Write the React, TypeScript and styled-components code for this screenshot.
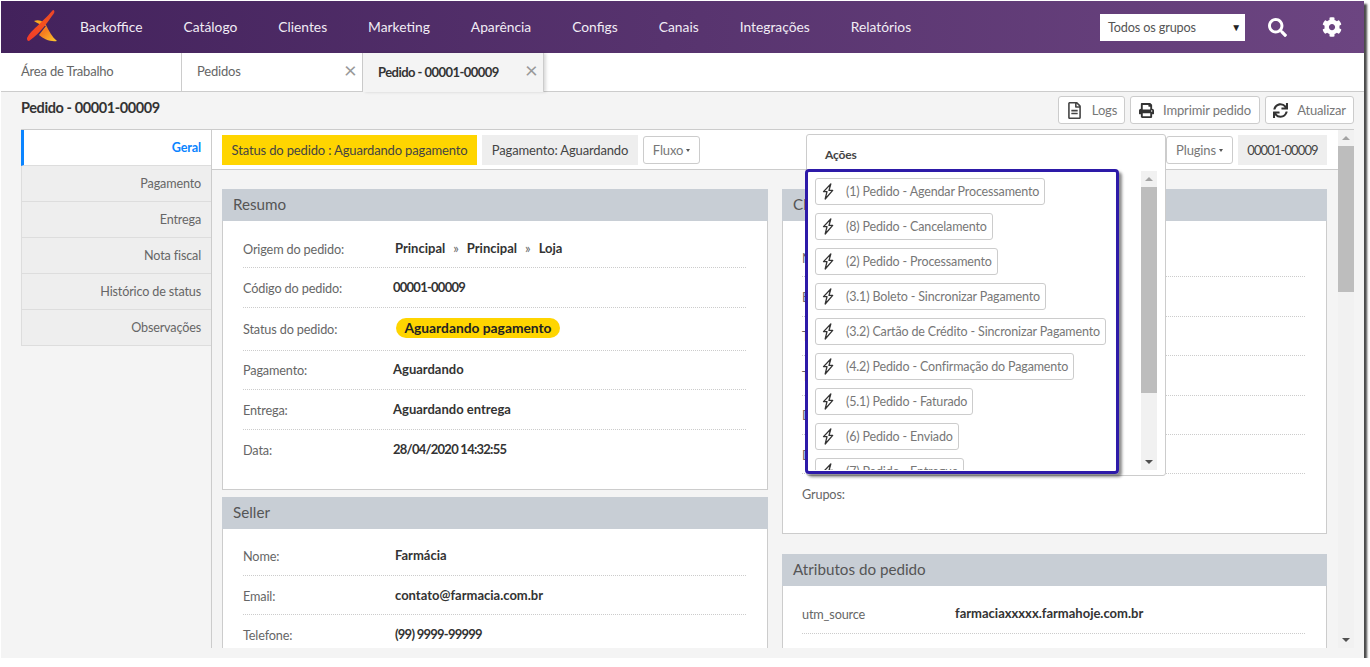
import React from 'react';
import styled, { createGlobalStyle } from 'styled-components';
import { FaCog, FaPrint, FaRegFileAlt, FaSearch, FaSync } from 'react-icons/fa';

const NAV_ITEMS = ['Backoffice', 'Catálogo', 'Clientes', 'Marketing', 'Aparência', 'Configs', 'Canais', 'Integrações', 'Relatórios'];
const SIDE_ITEMS = ['Geral', 'Pagamento', 'Entrega', 'Nota fiscal', 'Histórico de status', 'Observações'];
const ACTIONS = [
  '(1) Pedido - Agendar Processamento',
  '(8) Pedido - Cancelamento',
  '(2) Pedido - Processamento',
  '(3.1) Boleto - Sincronizar Pagamento',
  '(3.2) Cartão de Crédito - Sincronizar Pagamento',
  '(4.2) Pedido - Confirmação do Pagamento',
  '(5.1) Pedido - Faturado',
  '(6) Pedido - Enviado',
  '(7) Pedido - Entregue',
];

const Logo = () => (
  <svg width="32" height="36" viewBox="0 0 32 36">
    <defs>
      <linearGradient id="logoRed" x1="0" y1="1" x2="1" y2="0">
        <stop offset="0" stopColor="#f0392b" />
        <stop offset="0.6" stopColor="#f4511e" />
        <stop offset="1" stopColor="#e8432a" />
      </linearGradient>
      <linearGradient id="logoGold" x1="0" y1="0" x2="1" y2="1">
        <stop offset="0" stopColor="#fbb81f" />
        <stop offset="0.5" stopColor="#f57c1f" />
        <stop offset="1" stopColor="#fcca2e" />
      </linearGradient>
    </defs>
    <path d="M8 12 C14 10 18 13 20 16 C23 22 26 28 31 32 C24 33 18 30 13 26 L20 17 C15 16 11 14 8 12Z" fill="url(#logoGold)" />
    <path d="M27 1 C28.500 1 29 3 27.500 5 C22 12 16 23 3 32 C1 32 1 30 1 29 C6 20 13 17 27 1Z" fill="url(#logoRed)" />
  </svg>
);

// outlined bolt, the icon packages only have a wider one
const BoltIcon = () => (
  <svg width="12" height="17" viewBox="0 0 12 17" fill="none" stroke="#333" strokeWidth="1.300" strokeLinejoin="round">
    <path d="M8.800 1 L1.500 8.600 H5 L3.200 16 L10.700 7.400 H7 Z" />
  </svg>
);

const Row = ({ label, value, valueAt = 150, inset, numeric }: { label: string; value?: React.ReactNode; valueAt?: number; inset?: boolean; numeric?: boolean }) => (
  <StyledRow>
    <RowLabel $width={valueAt}>{label}</RowLabel>
    <RowValue $inset={inset} $numeric={numeric}>{value}</RowValue>
  </StyledRow>
);

const App = () => {
  return (
    <>
      <GlobalStyle />
      <Frame>
        <TopBar>
          <LogoSlot>
            <Logo />
          </LogoSlot>
          <Nav>
            {NAV_ITEMS.map((item) => (
              <NavLink key={item}>{item}</NavLink>
            ))}
          </Nav>
          <GroupSelect>
            Todos os grupos
            <GroupCaret>▼</GroupCaret>
          </GroupSelect>
          <TopIcon $left={23}>
            <FaSearch size={19} />
          </TopIcon>
          <TopIcon $left={35}>
            <FaCog size={20} />
          </TopIcon>
        </TopBar>

        <TabBar>
          <Tab>Área de Trabalho</Tab>
          <Tab>
            Pedidos
            <TabClose>×</TabClose>
          </Tab>
          <Tab $active>
            Pedido - 00001-00009
            <TabClose>×</TabClose>
          </Tab>
        </TabBar>

        <PageHead>
          <PageTitle>Pedido - 00001-00009</PageTitle>
          <HeadActions>
            <HeadButton $width={67}>
              <FaRegFileAlt size={17} color="#444" />
              Logs
            </HeadButton>
            <HeadButton $width={130}>
              <FaPrint size={15} color="#333" />
              Imprimir pedido
            </HeadButton>
            <HeadButton $width={89}>
              <FaSync size={15} color="#333" />
              Atualizar
            </HeadButton>
          </HeadActions>
        </PageHead>

        <Workspace>
          <SideNav>
            {SIDE_ITEMS.map((item, i) => (
              <SideItem key={item} $active={i === 0}>
                {item}
              </SideItem>
            ))}
          </SideNav>

          <Content>
            <Toolbar>
              <StatusTag $yellow $width={255}>Status do pedido : Aguardando pagamento</StatusTag>
              <StatusTag $width={156}>Pagamento: Aguardando</StatusTag>
              <ToolButton $width={57}>
                Fluxo <Caret />
              </ToolButton>
              <ToolbarEnd>
                <ToolButton $width={67}>
                  Plugins <Caret />
                </ToolButton>
                <StatusTag $width={89} $numeric>00001-00009</StatusTag>
              </ToolbarEnd>
            </Toolbar>

            <Columns>
              <Column $gap={7}>
                <Card>
                  <CardHead>Resumo</CardHead>
                  <CardBody $top={8} $left={20}>
                    <Row
                      label="Origem do pedido:"
                      inset
                      value={
                        <Trail>
                          Principal <TrailSep>»</TrailSep> Principal <TrailSep>»</TrailSep> Loja
                        </Trail>
                      }
                    />
                    <Row label="Código do pedido:" value="00001-00009" numeric />
                    <StatusRow>
                      <RowLabel $width={150}>Status do pedido:</RowLabel>
                      <Pill>Aguardando pagamento</Pill>
                    </StatusRow>
                    <Row label="Pagamento:" value="Aguardando" />
                    <Row label="Entrega:" value="Aguardando entrega" />
                    <Row label="Data:" value="28/04/2020 14:32:55" numeric />
                  </CardBody>
                </Card>
                <Card>
                  <CardHead>Seller</CardHead>
                  <CardBody $top={8} $left={20}>
                    <Row label="Nome:" value="Farmácia" inset />
                    <Row label="Email:" value="contato@farmacia.com.br" inset />
                    <Row label="Telefone:" value="(99) 9999-99999" inset numeric />
                  </CardBody>
                </Card>
              </Column>

              <Column $gap={20}>
                <Card>
                  <CardHead>Cliente</CardHead>
                  <CardBody $top={17} $left={19}>
                    <Row label="Nome:" valueAt={153} />
                    <Row label="Email:" valueAt={153} />
                    <Row label="Telefone:" valueAt={153} />
                    <Row label="Tipo:" valueAt={153} />
                    <Row label="Documento:" valueAt={153} />
                    <Row label="Data:" valueAt={153} />
                    <Row label="Grupos:" valueAt={153} />
                  </CardBody>
                </Card>
                <Card>
                  <CardHead>Atributos do pedido</CardHead>
                  <CardBody $top={8} $left={19}>
                    <Row label="utm_source" value="farmaciaxxxxx.farmahoje.com.br" valueAt={153} />
                    <Row label="" />
                  </CardBody>
                </Card>
              </Column>
            </Columns>

            <ActionsPopup>
              <PopupTitle>Ações</PopupTitle>
              <ActionsArea>
                <ActionList>
                  {ACTIONS.map((action) => (
                    <ActionButton key={action}>
                      <BoltIcon />
                      {action}
                    </ActionButton>
                  ))}
                </ActionList>
                <Scrollbar $thumbHeight={206} />
                <Highlight />
              </ActionsArea>
            </ActionsPopup>
          </Content>

          <Scrollbar $thumbHeight={146} />
        </Workspace>
      </Frame>
    </>
  );
};

const Scrollbar = ({ $thumbHeight }: { $thumbHeight: number }) => (
  <ScrollTrack>
    <ScrollArrow />
    <ScrollThumb $height={$thumbHeight} />
    <ScrollFill />
    <ScrollArrow $down />
  </ScrollTrack>
);

/**
 * styles
 */
const GlobalStyle = createGlobalStyle`
  html, body {
    margin: 0;
    padding: 0;
    background: #fff;
    font-family: Lato, "Open Sans", sans-serif;
    font-size: 13px;
    letter-spacing: -0.15px;
    color: #555;
  }
`;

const Frame = styled.div`
  width: 1363px;
  height: 657px;
  margin: 1px 0 0 1px;
  display: flex;
  flex-direction: column;
  background: #f4f4f4;
  box-shadow: 3px 3px 2px #4a4a4a;
  overflow: hidden;
`;

const TopBar = styled.header`
  height: 52px;
  flex: none;
  display: flex;
  align-items: center;
  background: linear-gradient(90deg, #43225c 0%, #6c4581 100%);
`;

const LogoSlot = styled.div`
  width: 79px;
  padding-left: 25px;
  box-sizing: border-box;
  display: flex;
`;

const Nav = styled.nav`
  display: flex;
  gap: 41px;
  flex: 1;
  padding-bottom: 2px;
`;

const NavLink = styled.a`
  color: #f1ecf5;
  font-size: 13.8px;
  letter-spacing: 0;
`;

const GroupSelect = styled.div`
  width: 145px;
  height: 27px;
  box-sizing: border-box;
  padding: 0 4px 0 8px;
  display: flex;
  align-items: center;
  justify-content: space-between;
  background: #fff;
  color: #555;
  font-size: 12.7px;
`;

const GroupCaret = styled.span`
  font-size: 10px;
  color: #222;
`;

const TopIcon = styled.span<{ $left: number }>`
  display: flex;
  color: #fff;
  margin-left: ${(p) => p.$left}px;
  &:last-child {
    margin-right: 22px;
  }
`;

const TabBar = styled.div`
  height: 39px;
  flex: none;
  box-sizing: border-box;
  display: flex;
  background: #fff;
  border-bottom: 1px solid #ccc;
`;

const Tab = styled.div<{ $active?: boolean }>`
  width: 181px;
  height: ${(p) => (p.$active ? '39px' : '38px')};
  box-sizing: border-box;
  padding: 0 0 2px 15px;
  display: flex;
  align-items: center;
  justify-content: space-between;
  white-space: nowrap;
  border-right: 1px solid #ccc;
  background: ${(p) => (p.$active ? '#f4f4f4' : '#fff')};
  color: ${(p) => (p.$active ? '#333' : '#666')};
  font-weight: ${(p) => (p.$active ? 700 : 400)};
  letter-spacing: ${(p) => (p.$active ? '-0.55px' : '-0.2px')};
  box-shadow: ${(p) => (p.$active ? '2px 0 3px rgba(0, 0, 0, 0.15)' : 'none')};
  &:first-child {
    padding-left: 20px;
  }
`;

const TabClose = styled.span`
  width: 18px;
  text-align: left;
  font-size: 22px;
  font-weight: 400;
  line-height: 20px;
  color: #999;
  margin-top: -3px;
`;

const PageHead = styled.div`
  height: 37px;
  flex: none;
  box-sizing: border-box;
  padding: 4px 10px 5px 20px;
  display: flex;
  justify-content: space-between;
`;

const PageTitle = styled.h1`
  margin: 3px 0 0;
  font-size: 14.5px;
  font-weight: 700;
  letter-spacing: -0.4px;
  color: #333;
`;

const HeadActions = styled.div`
  display: flex;
  gap: 5px;
`;

const HeadButton = styled.button<{ $width: number }>`
  width: ${(p) => p.$width}px;
  height: 28px;
  padding: 0;
  display: flex;
  align-items: center;
  justify-content: center;
  gap: 9px;
  background: #fff;
  border: 1px solid #ccc;
  border-radius: 3px;
  font: inherit;
  letter-spacing: inherit;
  color: #777;
`;

const Workspace = styled.div`
  height: 518px;
  flex: none;
  margin: 0 10px 0 20px;
  display: flex;
  border-top: 1px solid #ccc;
`;

const SideNav = styled.aside`
  width: 190px;
  flex: none;
`;

const SideItem = styled.div<{ $active?: boolean }>`
  height: 36px;
  box-sizing: border-box;
  padding: 0 10px 1px 0;
  display: flex;
  align-items: center;
  justify-content: flex-end;
  border-bottom: 1px solid #ddd;
  border-left: ${(p) => (p.$active ? '3px solid #0a84ff' : '1px solid #ddd')};
  background: ${(p) => (p.$active ? '#fff' : '#eee')};
  color: ${(p) => (p.$active ? '#0a84ff' : '#666')};
  font-size: 12.6px;
  font-weight: ${(p) => (p.$active ? 700 : 400)};
`;

const Content = styled.main`
  position: relative;
  flex: 1;
  min-width: 0;
  border-left: 1px solid #ccc;
  overflow: hidden;
`;

const Toolbar = styled.div`
  height: 40px;
  box-sizing: border-box;
  padding: 5px 11px 0 10px;
  display: flex;
  align-items: flex-start;
  gap: 5px;
  background: #fff;
  border-bottom: 1px solid #ccc;
`;

const ToolbarEnd = styled.div`
  margin-left: auto;
  display: flex;
  align-items: flex-start;
  gap: 5px;
`;

const StatusTag = styled.div<{ $yellow?: boolean; $width: number; $numeric?: boolean }>`
  width: ${(p) => p.$width}px;
  height: 30px;
  display: flex;
  align-items: center;
  justify-content: center;
  background: ${(p) => (p.$yellow ? '#ffd500' : '#eee')};
  color: #444;
  letter-spacing: ${(p) => (p.$numeric ? '-0.9px' : 'inherit')};
`;

const ToolButton = styled.button<{ $width: number }>`
  width: ${(p) => p.$width}px;
  height: 28px;
  margin-top: 1px;
  padding: 0;
  display: flex;
  align-items: center;
  justify-content: center;
  gap: 3px;
  background: #fff;
  border: 1px solid #ccc;
  border-radius: 3px;
  font: inherit;
  letter-spacing: inherit;
  color: #777;
`;

const Caret = styled.i`
  width: 0;
  height: 0;
  border-left: 2.500px solid transparent;
  border-right: 2.500px solid transparent;
  border-top: 3px solid #555;
`;

const Columns = styled.div`
  padding: 19px 11px 0 10px;
  display: grid;
  grid-template-columns: 546px 545px;
  gap: 14px;
`;

const Column = styled.div<{ $gap: number }>`
  display: flex;
  flex-direction: column;
  gap: ${(p) => p.$gap}px;
`;

const Card = styled.section`
  background: #fff;
  border: 1px solid #ccc;
  border-top: 0;
`;

const CardHead = styled.h2`
  height: 32px;
  margin: 0 -1px;
  padding: 0 0 2px 11px;
  box-sizing: border-box;
  display: flex;
  align-items: center;
  background: #c8ced5;
  font-size: 15.2px;
  font-weight: 400;
  letter-spacing: 0;
  color: #555;
`;

const CardBody = styled.div<{ $top: number; $left: number }>`
  padding: ${(p) => p.$top}px 21px 20px ${(p) => p.$left}px;
`;

const StyledRow = styled.div`
  min-height: 39.4px;
  box-sizing: border-box;
  display: flex;
  align-items: center;
  border-bottom: 1px dotted #ccc;
  &:last-child {
    border-bottom: 0;
    min-height: 39px;
  }
`;

const StatusRow = styled(StyledRow)`
  min-height: 43px;
`;

const RowLabel = styled.span<{ $width: number }>`
  width: ${(p) => p.$width}px;
  flex: none;
  padding-top: 1px;
  color: #666;
  font-size: 12.7px;
`;

const RowValue = styled.span<{ $inset?: boolean; $numeric?: boolean }>`
  padding-left: ${(p) => (p.$inset ? 2 : 0)}px;
  margin-top: -1px;
  color: #333;
  font-weight: 700;
  letter-spacing: ${(p) => (p.$numeric ? '-0.75px' : '0')};
`;

const Trail = styled.span`
  display: inline-flex;
  gap: 8px;
`;

const TrailSep = styled.span`
  font-weight: 400;
  color: #666;
`;

const Pill = styled.span`
  width: 164px;
  height: 20px;
  margin: -2px 0 0 3px;
  display: flex;
  align-items: center;
  justify-content: center;
  border-radius: 10px;
  background: #ffd500;
  color: #222;
  font-size: 13.8px;
  font-weight: 700;
  letter-spacing: 0;
`;

const ActionsPopup = styled.div`
  position: absolute;
  top: 4px;
  left: 594px;
  width: 360px;
  height: 342px;
  box-sizing: border-box;
  background: #fff;
  border: 1px solid #ccc;
  border-radius: 3px;
`;

const PopupTitle = styled.h3`
  height: 36px;
  box-sizing: border-box;
  margin: 0;
  padding: 2px 0 0 18px;
  display: flex;
  align-items: center;
  font-size: 12px;
  font-weight: 700;
  color: #444;
`;

const ActionsArea = styled.div`
  position: relative;
  height: 299px;
  display: flex;
  padding-right: 8px;
`;

const ActionList = styled.div`
  flex: 1;
  min-width: 0;
  padding: 7px 0 0 8px;
  display: flex;
  flex-direction: column;
  align-items: flex-start;
  gap: 8px;
  overflow: hidden;
`;

const ActionButton = styled.div`
  height: 27px;
  flex: none;
  box-sizing: border-box;
  padding: 0 5px 0 6px;
  display: flex;
  align-items: center;
  gap: 12px;
  background: #fff;
  border: 1px solid #ccc;
  border-radius: 3px;
  color: #777;
  font-size: 12.5px;
  white-space: nowrap;
`;

const Highlight = styled.div`
  position: absolute;
  top: -2px;
  left: -2px;
  width: 314px;
  height: 305px;
  box-sizing: border-box;
  border: 3px solid #2d1aa8;
  border-radius: 4px;
  box-shadow: 3px 3px 3px rgba(0, 0, 0, 0.45);
  pointer-events: none;
`;

const ScrollTrack = styled.div`
  width: 16px;
  flex: none;
  display: flex;
  flex-direction: column;
  background: #f1f1f1;
`;

const ScrollArrow = styled.div<{ $down?: boolean }>`
  height: 16px;
  flex: none;
  display: flex;
  align-items: center;
  justify-content: center;
  &::before {
    content: '';
    border-left: 4px solid transparent;
    border-right: 4px solid transparent;
    border-top: ${(p) => (p.$down ? '4px solid #505050' : '0')};
    border-bottom: ${(p) => (p.$down ? '0' : '4px solid #a3a3a3')};
  }
`;

const ScrollThumb = styled.div<{ $height: number }>`
  height: ${(p) => p.$height}px;
  flex: none;
  background: #bdbdbd;
`;

const ScrollFill = styled.div`
  flex: 1;
`;

export default App;
